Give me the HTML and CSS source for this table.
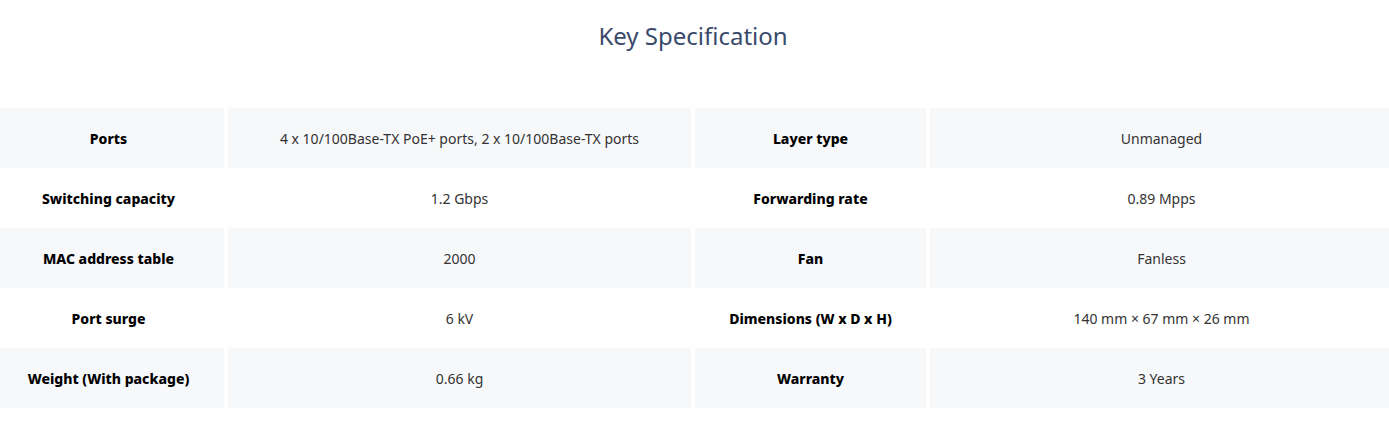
FILE: index.html
```html
<!DOCTYPE html>
<html lang="en">
<head>
<meta charset="utf-8">
<title>Key Specification</title>
<link rel="stylesheet" href="styles.css">
</head>
<body>
<section class="spec">
  <h2 class="spec-title">Key Specification</h2>
  <div class="spec-table">
    <div class="row shaded">
      <div class="cell label">Ports</div>
      <div class="cell value">4 x 10/100Base-TX PoE+ ports, 2 x 10/100Base-TX ports</div>
      <div class="cell label">Layer type</div>
      <div class="cell value">Unmanaged</div>
    </div>
    <div class="row">
      <div class="cell label">Switching capacity</div>
      <div class="cell value">1.2 Gbps</div>
      <div class="cell label">Forwarding rate</div>
      <div class="cell value">0.89 Mpps</div>
    </div>
    <div class="row shaded">
      <div class="cell label">MAC address table</div>
      <div class="cell value">2000</div>
      <div class="cell label">Fan</div>
      <div class="cell value">Fanless</div>
    </div>
    <div class="row">
      <div class="cell label">Port surge</div>
      <div class="cell value">6 kV</div>
      <div class="cell label">Dimensions (W x D x H)</div>
      <div class="cell value">140 mm × 67 mm × 26 mm</div>
    </div>
    <div class="row shaded">
      <div class="cell label">Weight (With package)</div>
      <div class="cell value">0.66 kg</div>
      <div class="cell label">Warranty</div>
      <div class="cell value">3 Years</div>
    </div>
  </div>
</section>
</body>
</html>
```

FILE: styles.css
```css
html, body {
  margin: 0;
  padding: 0;
  background: #ffffff;
  overflow: hidden;
}

body {
  font-family: "Noto Sans", "Open Sans", "Liberation Sans", sans-serif;
  color: #333333;
}

.spec {
  display: flex;
  flex-direction: column;
  width: 1400px;
  margin-left: -7px;
}

.spec-title {
  margin: 0;
  height: 108px;
  padding-top: 20px;
  box-sizing: border-box;
  text-align: center;
  font-size: 24px;
  font-weight: 400;
  line-height: 32px;
  color: #3a4a6b;
}

.spec-table {
  display: flex;
  flex-direction: column;
}

.row {
  display: grid;
  grid-template-columns: 231px 463px 231px 463px;
  column-gap: 4px;
  height: 60px;
}

.row.shaded .cell {
  background: #f7f8fa;
}

.cell {
  display: flex;
  align-items: center;
  justify-content: center;
  text-align: center;
  font-size: 14px;
  line-height: 20px;
  padding-top: 2px;
  box-sizing: border-box;
}

.cell.label {
  font-weight: 800;
  color: #000000;
}

.cell.value {
  color: #333333;
}
```
